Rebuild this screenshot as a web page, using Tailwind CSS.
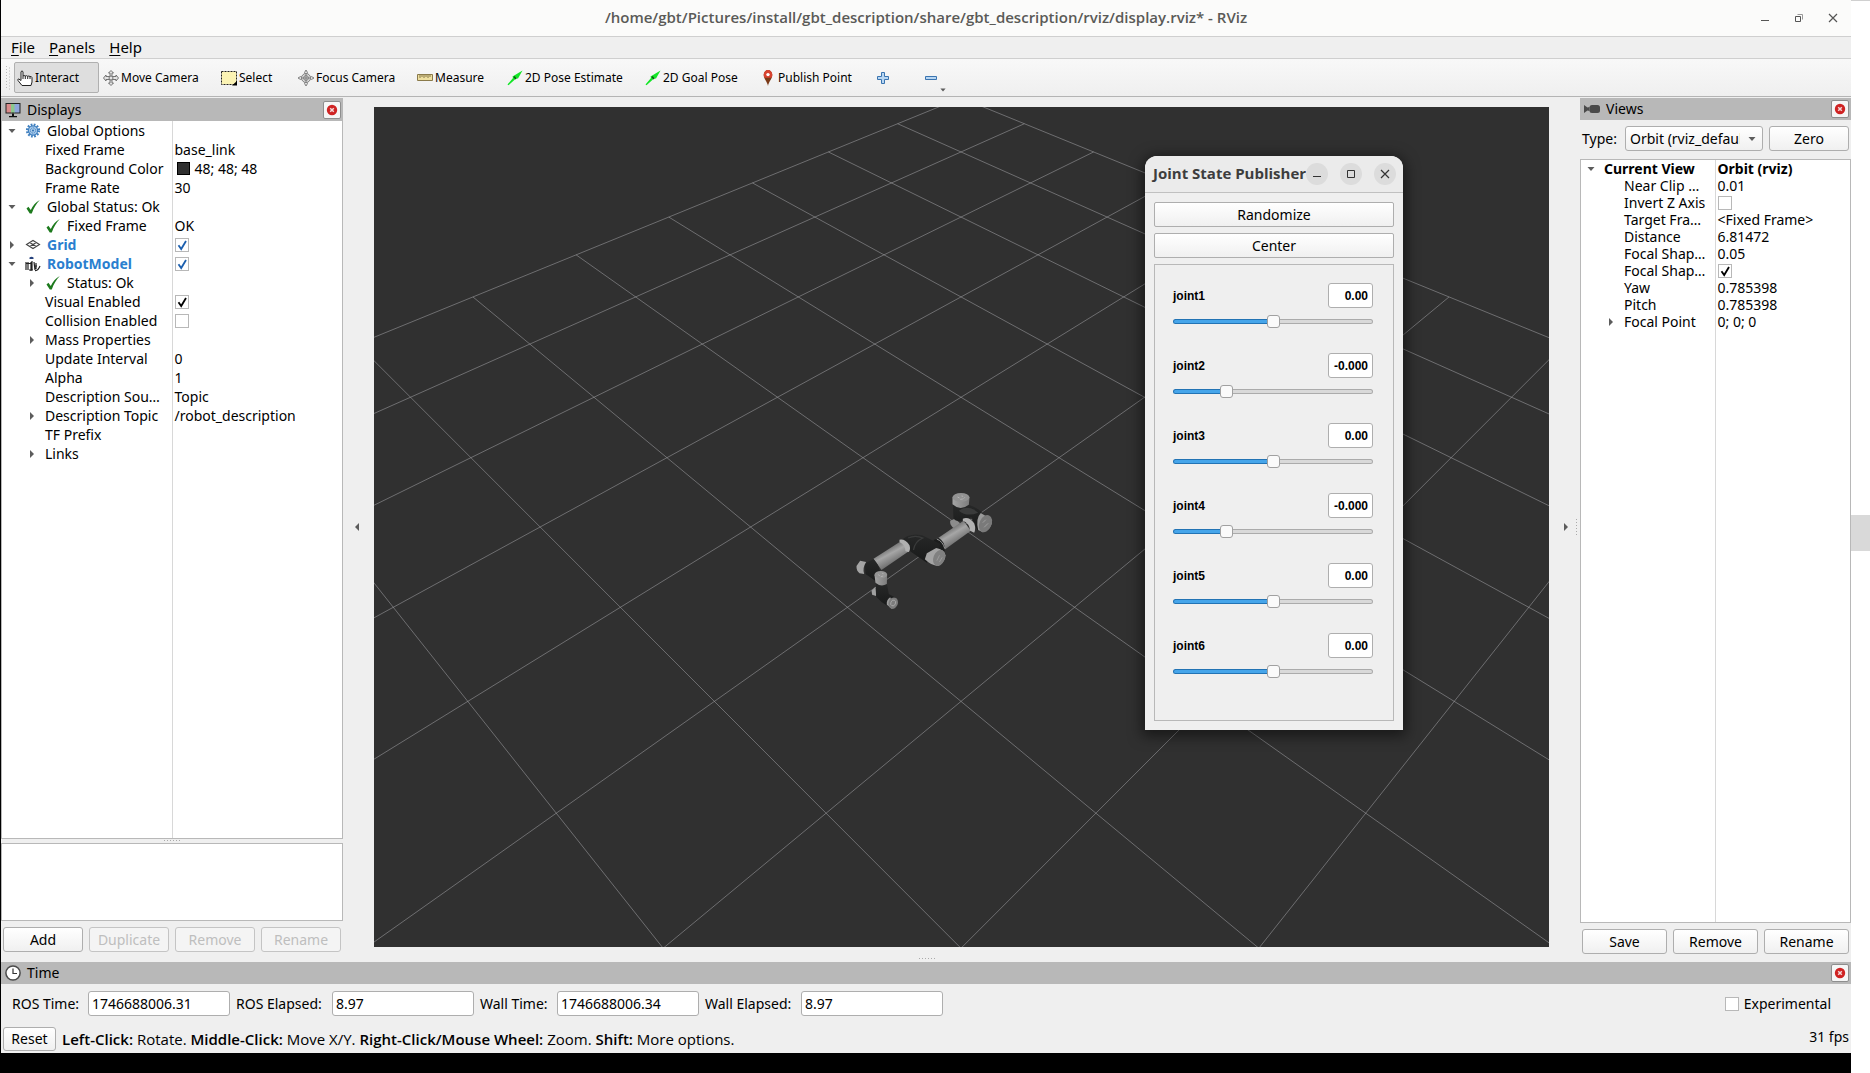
<!DOCTYPE html>
<html lang="en">
<head>
  <meta charset="utf-8">
  <title>RViz</title>
  <script src="https://cdn.jsdelivr.net/npm/@tailwindcss/browser@4"></script>
</head>
<body class="flex h-screen overflow-hidden bg-white font-['Noto_Sans','Open_Sans',sans-serif] text-sm text-black">

  <!-- shared icons -->
  <svg class="hidden">
    <symbol id="i-check" viewBox="0 0 14 14"><path d="M3.5 7.2 6.2 11 11 3" fill="none" stroke="currentColor" stroke-width="1.8"/></symbol>
    <symbol id="i-ok" viewBox="0 0 16 16"><path d="M1.500 9.500 3.400 7.800 5.800 11C7.800 6.800 10.400 3.400 14.800 1 11 5 8.800 9 6.800 14.400H4.800Z" fill="#1d7a1d"/></symbol>
    <symbol id="i-down" viewBox="0 0 8 8"><path d="M.5 2h7L4 6Z" fill="#5c5c5c"/></symbol>
    <symbol id="i-right" viewBox="0 0 8 8"><path d="M2 0v8l4-4Z" fill="#5c5c5c"/></symbol>
    <symbol id="i-gear" viewBox="0 0 16 16">
      <circle cx="8" cy="7.500" r="5.800" fill="none" stroke="#3f7fbf" stroke-width="2.600" stroke-dasharray="1.700 1.340"/>
      <circle cx="8" cy="7.500" r="4.600" fill="#a9cbec" stroke="#3f7fbf" stroke-width="1.200"/>
      <circle cx="8" cy="7.500" r="2.600" fill="none" stroke="#3f7fbf" stroke-dasharray="1.300 .7"/>
      <circle cx="8" cy="7.500" r="1" fill="#2f6fb0"/>
    </symbol>
    <symbol id="i-grid" viewBox="0 0 16 16"><path d="M1.500 7.500 8 3.500l6.500 4L8 11.500ZM4.700 5.500l6.500 4M11.300 5.500l-6.500 4" fill="none" stroke="#444" stroke-width="1.100"/></symbol>
    <symbol id="i-robot" viewBox="0 0 16 16">
      <path d="M4.500 1.500q2-1.500 4 0v1.500h-4z" fill="#24407c"/>
      <path d="M1 6v8M3 6v8M1 7.500h5M6 6v9M7 5v9M9 6l1 8M4 14h4M9 10h3M11 7v6M10 14.500q3 .5 5-4.500" fill="none" stroke="#222" stroke-width="1.200"/>
    </symbol>
    <symbol id="i-close" viewBox="0 0 12 12">
      <circle cx="6" cy="6" r="5.200" fill="#cf2323"/>
      <path d="M4.200 4.200 7.800 7.800M7.800 4.200 4.200 7.800" stroke="#f4dada" stroke-width="1.500"/>
    </symbol>
    <symbol id="i-arrow" viewBox="0 0 16 16"><path d="M.5 14.500 6 8 5.500 6.500 15.500.500 11 8.500 9 8.500 1.500 15.300Z" fill="#12e626"/><path d="m7 6.500 2 2.500" stroke="#0a5a12" stroke-width="1.600"/></symbol>
  </svg>

  <div class="flex min-w-0 flex-1 flex-col border-l border-black bg-[#efefef]">

    <!-- window title -->
    <header class="grid h-[37px] shrink-0 grid-cols-[1fr_auto_1fr] items-center border-b border-[#cfcfcf] bg-[#fbfbfa]">
      <h1 class="col-start-2 font-['Open_Sans'] text-[15px] font-semibold text-[#5a5a57]">/home/gbt/Pictures/install/gbt_description/share/gbt_description/rviz/display.rviz* - RViz</h1>
      <div class="flex justify-end pr-px">
        <button aria-label="Minimize" class="grid h-6 w-[34px] place-items-center"><svg class="size-[10px]" viewBox="0 0 10 10"><path d="M1 7.500h8" stroke="#555"/></svg></button>
        <button aria-label="Restore" class="grid h-6 w-[34px] place-items-center"><svg class="size-[10px]" viewBox="0 0 10 10" fill="none"><path d="M1.500 3.500h5v5h-5z" stroke="#555"/><path d="M3.500 1.500h5v5" stroke="#999"/></svg></button>
        <button aria-label="Close" class="grid h-6 w-[34px] place-items-center"><svg class="size-[10px]" viewBox="0 0 10 10"><path d="m1 1 8 8M9 1 1 9" stroke="#555" stroke-width="1.200"/></svg></button>
      </div>
    </header>

    <nav class="flex h-[22px] shrink-0 items-center gap-[14px] border-b border-[#cfcfcf] px-[10px] text-[15px]">
      <a href="#"><u class="underline-offset-2">F</u>ile</a>
      <a href="#"><u class="underline-offset-2">P</u>anels</a>
      <a href="#"><u class="underline-offset-2">H</u>elp</a>
    </nav>

    <!-- tools -->
    <div class="flex h-[38px] shrink-0 items-center gap-[2px] border-b border-[#b4b4b4] bg-linear-to-b from-[#f8f8f8] to-[#efefef] pl-[5px] text-xs whitespace-nowrap">
      <svg class="mr-px h-6 w-[5px]" viewBox="0 0 5 24"><path d="M.5 0v24M3.500 1.500v22" stroke="#bbb" stroke-dasharray="1 2"/></svg>
      <button class="flex h-[31px] w-[85px] items-center gap-[2px] rounded-[2px] border border-[#b0b0b0] bg-[#dedede] pl-[2px]">
        <svg class="size-4" viewBox="0 0 16 16"><path d="M5 15.500 1 10.500Q.3 9 1.800 9L4 10.500V1.700Q5 0 6 1.700V6q1-1 2.300 0Q9.500 5.200 10.700 6.300 12 5.500 13 6.600q1.600-.5 2 1V12l-1 3.500Z" fill="#fff" stroke="#222"/><path d="M6 6v3M8.300 6v3M10.700 6.300V9M13 6.800V9" stroke="#222"/></svg>Interact</button>
      <button class="flex h-[31px] w-[116px] items-center gap-[2px] pl-[2px]">
        <svg class="size-4" viewBox="0 0 16 16" fill="#e4e4e4" stroke="#666" stroke-width=".9"><path d="M8 .5 10.500 3H9v3.500h4V5l2.500 3-2.500 3V9.500H9V13h1.500L8 15.500 5.500 13H7V9.500H3V11L.5 8 3 5v1.500h4V3H5.500Z"/><circle cx="8" cy="8" r="2"/></svg>Move Camera</button>
      <button class="flex h-[31px] w-[75px] items-center gap-[2px] pl-[2px]">
        <svg class="size-4" viewBox="0 0 16 16"><path d="M.5 1.500h15v13H.5z" fill="#fbf3b4" stroke="#222" stroke-dasharray="2 1"/><path d="M16 11v4.500h-5Z" fill="#000"/></svg>Select</button>
      <button class="flex h-[31px] w-[117px] items-center gap-[2px] pl-[2px]">
        <svg class="size-4" viewBox="0 0 16 16" fill="#ddd" stroke="#777" stroke-width=".9"><path d="M8 0 9.500 2.500 8.800 4H7.200L6.500 2.500ZM8 16l1.500-2.500L8.800 12H7.200l-.7 1.500ZM0 8l2.500-1.500L4 7.200v1.600l-1.500.7ZM16 8l-2.500-1.500-1.500.7v1.600l1.500.7Z"/><circle cx="8" cy="8" r="4.500"/><circle cx="8" cy="8" r="2.400"/><path d="M8 4v8M4 8h8"/></svg>Focus Camera</button>
      <button class="flex h-[31px] w-[88px] items-center gap-[2px] pl-[2px]">
        <svg class="size-4" viewBox="0 0 16 16"><path d="M.5 4.500h15v6H.5z" fill="#eedfa0" stroke="#8a7a4a"/><path d="M3 5v3M5 5v2M7 5v3M9 5v2M11 5v3M13 5v2" stroke="#6a5c34" stroke-width=".8"/></svg>Measure</button>
      <button class="flex h-[31px] w-[136px] items-center gap-[2px] pl-[2px]"><svg class="size-4"><use href="#i-arrow"/></svg>2D Pose Estimate</button>
      <button class="flex h-[31px] w-[114px] items-center gap-[2px] pl-[2px]"><svg class="size-4"><use href="#i-arrow"/></svg>2D Goal Pose</button>
      <button class="flex h-[31px] w-[99px] items-center gap-[2px] pl-px">
        <svg class="size-4" viewBox="0 0 16 16"><path d="M8 16C7.300 11.500 3.700 9 3.700 4.800a4.300 4.800 0 0 1 8.600 0C12.300 9 8.700 11.500 8 16Z" fill="#7b3a17"/><path d="M3.700 4.800a4.300 4.800 0 0 1 8.600 0q0 1.500-.8 3h-7q-.8-1.500-.8-3Z" fill="#d8432f"/><circle cx="8" cy="4.600" r="1.700" fill="#fff"/></svg>Publish Point</button>
      <button aria-label="Add tool" class="grid h-[31px] w-[46px] place-items-center"><svg class="size-3" viewBox="0 0 12 12"><path d="M4.500.5h3v4h4v3h-4v4h-3v-4h-4v-3h4Z" fill="#b8d6f2" stroke="#3a74b0"/></svg></button>
      <button aria-label="Remove tool" class="relative grid h-[31px] w-[46px] place-items-center"><svg class="size-3" viewBox="0 0 12 12"><path d="M.5 4.500h11v3H.5z" fill="#b8d6f2" stroke="#3a74b0"/></svg>
        <svg class="absolute right-2 bottom-0 size-[6px]"><use href="#i-down"/></svg></button>
    </div>

    <div class="mt-px flex min-h-0 flex-1">

      <!-- displays -->
      <aside class="flex w-[342px] shrink-0 flex-col">
        <div class="flex h-[23px] shrink-0 items-center gap-[6px] bg-[#b8b8b8] pr-[2px] pl-1">
          <svg class="size-4" viewBox="0 0 16 16"><path d="M.5 1h15v10.500H.5z" fill="#222"/><path d="M1.500 2h5v8.500h-5z" fill="#d98a8a"/><path d="M6 2h4v8.500H6z" fill="#8cc78c"/><path d="M9.500 2h5v8.500h-5z" fill="#8fa6dc"/><path d="M7 11.500h2V14h3v1.200H4V14h3Z" fill="#111"/></svg>
          <h2 class="flex-1">Displays</h2>
          <button aria-label="Close Displays" class="grid h-[18px] w-[18px] place-items-center rounded-[2px] border border-[#8e8e8e] bg-[#f6f6f6]"><svg class="size-3"><use href="#i-close"/></svg></button>
        </div>
        <div class="min-h-0 flex-1 border border-t-0 border-[#b8b8b8] bg-white">
          <table class="h-full w-full table-fixed border-collapse leading-[19px]">
            <colgroup><col class="w-[170px]"><col></colgroup>
            <tbody id="displays"></tbody>
          </table>
        </div>
        <svg class="h-1 w-4 shrink-0 self-center" viewBox="0 0 16 4"><path d="M0 1.500h16" stroke="#aaa" stroke-dasharray="1 2"/></svg>
        <div class="h-[78px] shrink-0 border border-[#b8b8b8] bg-white"></div>
        <div class="mt-[6px] mb-[10px] grid grid-cols-4 gap-[6px] px-[2px]">
          <button class="h-[25px] rounded-[3px] border border-[#aeaeae] bg-linear-to-b from-white to-[#f0f0f0]">Add</button>
          <button disabled class="h-[25px] rounded-[3px] border border-[#c4c4c4] bg-[#f4f4f4] text-[#bebebe]">Duplicate</button>
          <button disabled class="h-[25px] rounded-[3px] border border-[#c4c4c4] bg-[#f4f4f4] text-[#bebebe]">Remove</button>
          <button disabled class="h-[25px] rounded-[3px] border border-[#c4c4c4] bg-[#f4f4f4] text-[#bebebe]">Rename</button>
        </div>
      </aside>

      <button aria-label="Collapse left dock" class="grid w-[31px] shrink-0 place-items-center pr-1 pb-[6px]"><svg class="size-2 rotate-180"><use href="#i-right"/></svg></button>

      <!-- 3D view -->
      <main class="flex min-w-0 flex-1 flex-col pt-[9px]">
        <div class="relative min-h-0 flex-1 overflow-hidden bg-[#303030]">
          <svg id="scene" class="block h-full w-full" viewBox="-587 -420 1175 840" preserveAspectRatio="xMidYMid slice">
            <defs>
              <linearGradient id="tube" x1=".3" y1=".2" x2=".7" y2=".8"><stop offset="0" stop-color="#5c5c5c"/><stop offset=".4" stop-color="#a6a6a6"/><stop offset="1" stop-color="#5e5e5e"/></linearGradient>
              <linearGradient id="cap" x1="0" x2="1"><stop offset="0" stop-color="#a4a4a4"/><stop offset="1" stop-color="#7c7c7c"/></linearGradient>
              <linearGradient id="dark" x1="0" y1="0" x2="0" y2="1"><stop offset="0" stop-color="#272828"/><stop offset="1" stop-color="#181919"/></linearGradient>
            </defs>
            <g id="grid" stroke="#a0a0a4" stroke-opacity=".55" stroke-width="1"></g>
            <!-- robot arm -->
            <g transform="translate(-121.500 -57) scale(.3333)">
              <path d="M332 152l14-6 16 14-16 16q-16-8-14-24Z" fill="#8c8c8c"/>
              <path d="M340 104 342 146Q352 158 374 150L396 142 414 182 432 136Q424 116 388 104Z" fill="url(#dark)"/>
              <path d="M358 122q28-20 58 6-34 14-58-6Z" fill="#3a3b3b"/>
              <path d="M339 83V103Q362 124 388 104L390 83Z" fill="url(#cap)"/>
              <ellipse cx="364.500" cy="82" rx="25.500" ry="13" fill="#929292"/>
              <path d="M354 81l6 3M366 78l5 1M362 88l8-1M376 82l-4 4" stroke="#c4c4c4" stroke-width="2"/>
              <path d="M424 129Q408 145 416 180L430 187Q458 178 458 150Z" fill="#9a9a9a"/>
              <ellipse cx="438" cy="161" rx="18" ry="27" transform="rotate(24 438 161)" fill="#7a7a7a"/>
              <path d="M430 158l9-9M434 172l12-12" stroke="#b0b0b0" stroke-width="2"/>
              <path d="M372 152 296 204 314 240 394 182Z" fill="url(#tube)"/>
              <path d="M370 146Q388 138 404 160 410 176 404 188L392 182Q390 160 370 152Z" fill="#b2b2b2"/>
              <path d="M282 210 298 204Q318 216 316 242L300 250Z" fill="#1c1d1d"/>
              <path d="M292 207Q310 214 316 236" fill="none" stroke="#9a9a9a" stroke-width="3"/>
              <path d="M184 212Q210 186 248 196L302 222 296 240 262 278 212 244Q206 226 184 212Z" fill="url(#dark)"/>
              <path d="M206 204Q228 194 250 204 226 214 222 240" fill="none" stroke="#3a3b3b" stroke-width="4"/>
              <path d="M262 250 290 234Q314 238 318 256 318 276 296 288 274 286 256 268Z" fill="#a3a3a3"/>
              <ellipse cx="299" cy="264" rx="17" ry="25" transform="rotate(22 299 264)" fill="#808080"/>
              <path d="M292 272l8-16M300 276l8-14" stroke="#a6a6a6" stroke-width="2"/>
              <path d="M184 214 102 266 126 300 208 244Z" fill="url(#tube)"/>
              <path d="M180 209Q198 206 210 226 214 238 208 246L198 244Q198 226 180 216Z" fill="#b0b0b0"/>
              <path d="M76 280 102 268Q118 284 120 300L136 322 118 340 78 312Z" fill="url(#dark)"/>
              <path d="M62 272 80 276Q68 294 74 312L60 310Q50 302 51 288Z" fill="#a4a4a4"/>
              <path d="M108 350 96 362 98 374 110 378Z" fill="#a0a0a0"/>
              <path d="M109 342 142 340 148 372 170 384 150 412 126 396 110 380Z" fill="url(#dark)"/>
              <path d="M105 314 108 338Q124 352 142 342L143 314Z" fill="url(#cap)"/>
              <ellipse cx="124" cy="314" rx="19" ry="11" fill="#949494"/>
              <path d="M116 314l5 3M128 310l4 1M124 320l7-2" stroke="#c0c0c0" stroke-width="2"/>
              <path d="M152 382Q140 390 142 404L156 416 168 414Z" fill="#9c9c9c"/>
              <ellipse cx="161" cy="399" rx="14" ry="17" transform="rotate(24 161 399)" fill="#7c7c7c"/>
              <ellipse cx="161" cy="399" rx="7" ry="9" transform="rotate(24 161 399)" fill="none" stroke="#b4b4b4" stroke-width="2"/>
            </g>
          </svg>

          <!-- floating joint window -->
          <section class="absolute top-[49px] right-[146px] w-[258px] rounded-t-xl bg-[#efefef] shadow-[0_3px_14px_3px_rgba(0,0,0,0.5)]">
            <div class="flex h-[37px] items-center justify-between rounded-t-xl border-b border-[#c0c0c0] bg-[#ebebeb] pr-[7px] pl-2">
              <h2 class="font-['Open_Sans'] text-[15px] font-bold whitespace-nowrap text-[#3d3d3d]">Joint State Publisher</h2>
              <div class="flex gap-3">
                <button aria-label="Minimize window" class="grid size-[22px] place-items-center rounded-full bg-[#dcdcdc]"><svg class="size-[10px]" viewBox="0 0 10 10"><path d="M1 7.500h8" stroke="#333"/></svg></button>
                <button aria-label="Maximize window" class="grid size-[22px] place-items-center rounded-full bg-[#dcdcdc]"><svg class="size-[10px]" viewBox="0 0 10 10"><path d="M1.500 1.500h7v7h-7z" fill="none" stroke="#333"/></svg></button>
                <button aria-label="Close window" class="grid size-[22px] place-items-center rounded-full bg-[#dcdcdc]"><svg class="size-[10px]" viewBox="0 0 10 10"><path d="m1 1 8 8M9 1 1 9" stroke="#333" stroke-width="1.200"/></svg></button>
              </div>
            </div>
            <div class="flex flex-col gap-[6px] p-[9px]">
              <button class="h-[25px] rounded-[2px] border border-[#aeaeae] bg-linear-to-b from-white to-[#f0f0f0]">Randomize</button>
              <button class="h-[25px] rounded-[2px] border border-[#aeaeae] bg-linear-to-b from-white to-[#f0f0f0]">Center</button>
              <div id="joints" class="flex flex-col gap-[25px] border border-[#b8b8b8] pt-[18px] pr-5 pb-[42px] pl-[18px]"></div>
            </div>
          </section>
        </div>
        <svg class="mr-[70px] h-[15px] w-4 shrink-0 self-center" viewBox="0 0 16 15"><path d="M0 11.500h16" stroke="#aaa" stroke-dasharray="1 2"/></svg>
      </main>

      <button aria-label="Collapse right dock" class="flex w-[31px] shrink-0 items-center justify-end gap-[6px] pr-[2px] pb-[6px]">
        <svg class="size-2"><use href="#i-right"/></svg>
        <svg class="h-4 w-[2px]" viewBox="0 0 2 16"><path d="M.5 0v16" stroke="#aaa" stroke-dasharray="1 2"/></svg>
      </button>

      <!-- views -->
      <aside class="flex w-[271px] shrink-0 flex-col">
        <div class="flex h-[22px] shrink-0 items-center gap-[6px] bg-[#b8b8b8] pr-[2px] pl-1">
          <svg class="size-4" viewBox="0 0 16 16" fill="#4a4a4a"><rect x="5.500" y="4" width="10.500" height="8" rx="2.500"/><path d="M0 4l3.500 2.500L5.500 6v4l-2-.5L0 12Z"/></svg>
          <h2 class="flex-1">Views</h2>
          <button aria-label="Close Views" class="grid h-[18px] w-[18px] place-items-center rounded-[2px] border border-[#8e8e8e] bg-[#f6f6f6]"><svg class="size-3"><use href="#i-close"/></svg></button>
        </div>
        <div class="flex items-center gap-[6px] px-[2px] pt-[6px] pb-2">
          <label for="viewType" class="w-[37px]">Type:</label>
          <div class="relative flex-1">
            <select id="viewType" class="block h-[25px] w-full appearance-none overflow-hidden rounded-[3px] border border-[#aeaeae] bg-linear-to-b from-white to-[#f0f0f0] pr-[22px] pl-1"><option>Orbit (rviz_default_plugins)</option></select>
            <svg class="pointer-events-none absolute top-[9px] right-[7px] size-2"><use href="#i-down"/></svg>
          </div>
          <button class="h-[25px] w-20 rounded-[3px] border border-[#aeaeae] bg-linear-to-b from-white to-[#f0f0f0]">Zero</button>
        </div>
        <div class="min-h-0 flex-1 border border-[#b8b8b8] bg-white">
          <table class="h-full w-full table-fixed border-collapse leading-[17px]">
            <colgroup><col class="w-[134px]"><col></colgroup>
            <tbody id="views"></tbody>
          </table>
        </div>
        <div class="mt-[6px] mb-2 grid grid-cols-3 gap-[6px] px-[2px]">
          <button class="h-[25px] rounded-[3px] border border-[#aeaeae] bg-linear-to-b from-white to-[#f0f0f0]">Save</button>
          <button class="h-[25px] rounded-[3px] border border-[#aeaeae] bg-linear-to-b from-white to-[#f0f0f0]">Remove</button>
          <button class="h-[25px] rounded-[3px] border border-[#aeaeae] bg-linear-to-b from-white to-[#f0f0f0]">Rename</button>
        </div>
      </aside>
    </div>

    <!-- time panel -->
    <section class="shrink-0">
      <div class="flex h-[22px] items-center gap-[6px] bg-[#b8b8b8] pr-[2px] pl-1">
        <svg class="size-4" viewBox="0 0 16 16"><circle cx="8" cy="8" r="7.100" fill="#fff" stroke="#4a4a4a" stroke-width="1.500"/><path d="M8 3.500v5h4" fill="none" stroke="#333" stroke-width="1.200"/></svg>
        <h2 class="flex-1">Time</h2>
        <button aria-label="Close Time" class="grid h-[18px] w-[18px] place-items-center rounded-[2px] border border-[#8e8e8e] bg-[#f6f6f6]"><svg class="size-3"><use href="#i-close"/></svg></button>
      </div>
      <div class="flex items-center gap-[6px] pt-[7px] pr-[18px] pl-[11px]">
        <label for="rosTime" class="w-[70px]">ROS Time:</label>
        <input id="rosTime" type="text" value="1746688006.31" class="h-[25px] w-[142px] rounded-[3px] border border-[#aeaeae] bg-white px-[3px]">
        <label for="rosElapsed" class="w-[90px]">ROS Elapsed:</label>
        <input id="rosElapsed" type="text" value="8.97" class="h-[25px] w-[142px] rounded-[3px] border border-[#aeaeae] bg-white px-[3px]">
        <label for="wallTime" class="w-[71px]">Wall Time:</label>
        <input id="wallTime" type="text" value="1746688006.34" class="h-[25px] w-[142px] rounded-[3px] border border-[#aeaeae] bg-white px-[3px]">
        <label for="wallElapsed" class="w-[90px]">Wall Elapsed:</label>
        <input id="wallElapsed" type="text" value="8.97" class="h-[25px] w-[142px] rounded-[3px] border border-[#aeaeae] bg-white px-[3px]">
        <label class="ml-auto flex items-center gap-[5px] pr-[2px]">
          <input type="checkbox" class="size-[14px] appearance-none border border-[#b8b8b8] bg-white">Experimental
        </label>
      </div>
    </section>

    <footer class="mt-[11px] flex shrink-0 items-center pr-[2px] pb-[2px] pl-[2px]">
      <button class="h-6 w-[53px] rounded-[3px] border border-[#aeaeae] bg-linear-to-b from-white to-[#f0f0f0]">Reset</button>
      <p class="ml-[6px] flex-1 font-['Open_Sans'] text-[15px] leading-5"><b class="font-semibold">Left-Click:</b> Rotate. <b class="font-semibold">Middle-Click:</b> Move X/Y. <b class="font-semibold">Right-Click/Mouse Wheel:</b> Zoom. <b class="font-semibold">Shift:</b> More options.</p>
      <span class="self-start leading-5">31 fps</span>
    </footer>
    <div class="h-5 shrink-0 bg-black"></div>
  </div>

  <!-- outer scrollbar -->
  <div class="flex w-[19px] shrink-0 flex-col justify-center border-t border-[#d0d0d0] pb-2">
    <div class="h-9 bg-[#d9d9d9]"></div>
  </div>

  <script>
    const icon = (name, cls) => `<svg class="${cls}"><use href="#${name}"/></svg>`;

    function checkbox(label, checked, color) {
      return `<span class="grid size-[14px]">
        <input type="checkbox" aria-label="${label}" ${checked ? 'checked' : ''} class="peer col-start-1 row-start-1 size-[14px] appearance-none border border-[#b8b8b8] bg-white">
        <svg class="pointer-events-none invisible col-start-1 row-start-1 size-[14px] peer-checked:visible ${color}"><use href="#i-check"/></svg>
      </span>`;
    }

    // [level, arrow, icon, name, value, name style]
    const blue = 'font-bold text-[#2a7fcf]';
    const displays = [
      [0, 'down', 'i-gear', 'Global Options', ''],
      [1, '', '', 'Fixed Frame', 'base_link'],
      [1, '', '', 'Background Color', '<span class="flex items-center gap-[5px] pl-[2px]"><i class="size-[13px] border border-black bg-[#303030]"></i>48; 48; 48</span>'],
      [1, '', '', 'Frame Rate', '30'],
      [0, 'down', 'i-ok', 'Global Status: Ok', ''],
      [1, '', 'i-ok', 'Fixed Frame', 'OK'],
      [0, 'right', 'i-grid', 'Grid', checkbox('Grid', true, 'text-[#1c5fae]'), blue],
      [0, 'down', 'i-robot', 'RobotModel', checkbox('RobotModel', true, 'text-[#1c5fae]'), blue],
      [1, 'right', 'i-ok', 'Status: Ok', ''],
      [1, '', '', 'Visual Enabled', checkbox('Visual Enabled', true, 'text-black')],
      [1, '', '', 'Collision Enabled', checkbox('Collision Enabled', false, 'text-black')],
      [1, 'right', '', 'Mass Properties', ''],
      [1, '', '', 'Update Interval', '0'],
      [1, '', '', 'Alpha', '1'],
      [1, '', '', 'Description Sou…', 'Topic'],
      [1, 'right', '', 'Description Topic', '/robot_description'],
      [1, '', '', 'TF Prefix', ''],
      [1, 'right', '', 'Links', ''],
    ];
    const views = [
      [0, 'down', '', 'Current View', '<b>Orbit (rviz)</b>', 'font-bold'],
      [1, '', '', 'Near Clip …', '0.01'],
      [1, '', '', 'Invert Z Axis', checkbox('Invert Z Axis', false, 'text-black')],
      [1, '', '', 'Target Fra…', '&lt;Fixed Frame&gt;'],
      [1, '', '', 'Distance', '6.81472'],
      [1, '', '', 'Focal Shap…', '0.05'],
      [1, '', '', 'Focal Shap…', checkbox('Focal Shape Fixed Size', true, 'text-black')],
      [1, '', '', 'Yaw', '0.785398'],
      [1, '', '', 'Pitch', '0.785398'],
      [1, 'right', '', 'Focal Point', '0; 0; 0'],
    ];

    function fillTree(id, rows, height) {
      const body = rows.map(([level, arrow, ico, name, value, style]) => `
        <tr class="${height}">
          <td class="border-r border-[#d8d8d8] p-0">
            <div class="flex items-center whitespace-nowrap ${level ? 'pl-5' : ''}">
              <span class="mr-[3px] grid w-5 place-items-center">${arrow ? icon('i-' + arrow, 'size-2') : ''}</span>
              ${ico ? icon(ico, 'mr-[6px] size-4') : ''}
              <span class="${style || ''}">${name}</span>
            </div>
          </td>
          <td class="p-0 pl-[2px] whitespace-nowrap">${value}</td>
        </tr>`).join('');
      // last row stretches the column divider to the bottom
      document.getElementById(id).innerHTML = body +
        '<tr class="h-full"><td class="border-r border-[#d8d8d8] p-0"></td><td class="p-0"></td></tr>';
    }
    fillTree('displays', displays, 'h-[19px]');
    fillTree('views', views, 'h-[17px]');

    const joints = [['joint1', '0.00', 50], ['joint2', '-0.000', 25], ['joint3', '0.00', 50],
                    ['joint4', '-0.000', 25], ['joint5', '0.00', 50], ['joint6', '0.00', 50]];
    document.getElementById('joints').innerHTML = joints.map(([name, value, pos]) => `
      <div class="font-['Liberation_Sans'] text-xs font-bold">
        <div class="mb-[7px] flex items-center justify-between">
          <label for="${name}">${name}</label>
          <input type="text" readonly aria-label="${name} value" value="${value}" class="h-[25px] w-[45px] rounded-[3px] border border-[#aeaeae] bg-white px-1 text-right">
        </div>
        <input id="${name}" type="range" min="0" max="100" value="${pos}" style="--v:${pos}%"
          class="block h-[13px] w-full appearance-none bg-transparent [&::-webkit-slider-runnable-track]:h-[5px] [&::-webkit-slider-runnable-track]:rounded-[3px] [&::-webkit-slider-runnable-track]:border [&::-webkit-slider-runnable-track]:border-transparent [&::-webkit-slider-runnable-track]:[background:linear-gradient(90deg,#46a5ea_var(--v),#d9d9d9_var(--v))_padding-box,linear-gradient(90deg,#2273b4_var(--v),#ababab_var(--v))_border-box] [&::-webkit-slider-thumb]:-mt-[5px] [&::-webkit-slider-thumb]:size-[13px] [&::-webkit-slider-thumb]:appearance-none [&::-webkit-slider-thumb]:rounded-[3px] [&::-webkit-slider-thumb]:border [&::-webkit-slider-thumb]:border-[#a0a0a0] [&::-webkit-slider-thumb]:bg-[#fafafa]">
      </div>`).join('');

    // ground grid seen from the orbit camera (yaw = pitch = 45deg)
    const DISTANCE = 6.81472, FOCAL = 1014;
    function project(x, y) {
      const k = FOCAL / (DISTANCE - (x + y) / 2);
      return [(y - x) * Math.SQRT1_2 * k, (x + y) / 2 * k];
    }
    let lines = '';
    for (let i = -5; i <= 5; i++) {
      for (const [a, b] of [[project(i, -5), project(i, 5)], [project(-5, i), project(5, i)]]) {
        lines += `<line x1="${a[0]}" y1="${a[1]}" x2="${b[0]}" y2="${b[1]}"/>`;
      }
    }
    document.getElementById('grid').innerHTML = lines;
  </script>
</body>
</html>
